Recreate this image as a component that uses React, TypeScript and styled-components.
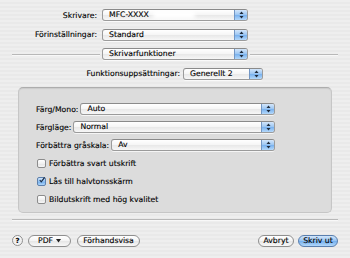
import React from 'react';
import styled, { createGlobalStyle } from 'styled-components';

const GlobalStyle = createGlobalStyle`
  html, body {
    margin: 0;
    padding: 0;
    background: #ececec;
  }
  body {
    font-family: "DejaVu Sans", "Liberation Sans", sans-serif;
    font-size: 7.7px;
    color: #000000;
    -webkit-text-stroke: 0.12px #000000;
  }
`;

const Window = styled.div`
  width: 350px;
  height: 258px;
  box-sizing: border-box;
  padding: 9px 12px 0;
  display: flex;
  flex-direction: column;
  background: repeating-linear-gradient(#eeeeee 0 2px, #e9e9e9 2px 4px);
  overflow: hidden;
`;

const TopSection = styled.div`
  display: flex;
  flex-direction: column;
  gap: 7.5px;
`;

const FormRow = styled.div<{ $labelWidth: number; $gap: number; $popWidth: number }>`
  display: grid;
  grid-template-columns: ${p => p.$labelWidth}px ${p => p.$popWidth}px;
  column-gap: ${p => p.$gap}px;
  align-items: center;
  height: 12px;
`;

const Label = styled.span`
  text-align: right;
  white-space: nowrap;
`;

const PopUpBox = styled.div<{ $flex?: boolean }>`
  position: relative;
  display: flex;
  align-items: center;
  height: 12px;
  box-sizing: border-box;
  border: 1px solid #9b9b9b;
  border-top-color: #8a8a8a;
  border-radius: 3px;
  background: linear-gradient(#ffffff, #f6f6f6 45%, #e9e9e9 55%, #f7f7f7);
  box-shadow: 0 1px 0 rgba(255, 255, 255, 0.7);
  overflow: hidden;
  ${p => (p.$flex ? 'flex: 1;' : '')}
`;

const PopUpValue = styled.span`
  flex: 1;
  padding-left: 6px;
  white-space: nowrap;
  line-height: 10px;
`;

const Redacted = styled.span`
  position: absolute;
  left: 50px;
  top: 1px;
  width: 42px;
  height: 8px;
  background: #ffffff;
  filter: blur(2px);
`;

const Stepper = styled.span`
  width: 12px;
  height: 100%;
  display: flex;
  align-items: center;
  justify-content: center;
  border-left: 1px solid #7296c4;
  background: linear-gradient(#d3e6fb, #9cc6f2 48%, #78b1ee 52%, #b4d8fa);
`;

const PopUp: React.FC<{ value: string; flex?: boolean; redacted?: boolean }> = ({ value, flex, redacted }) => (
  <PopUpBox $flex={flex}>
    <PopUpValue>{value}</PopUpValue>
    {redacted && <Redacted />}
    <Stepper>
      <svg width="5" height="8" viewBox="0 0 5 8">
        <path d="M2.5 0.5 L4.5 3 L0.5 3 Z" fill="#1e2a3a" />
        <path d="M0.5 5 L4.5 5 L2.5 7.5 Z" fill="#1e2a3a" />
      </svg>
    </Stepper>
  </PopUpBox>
);

const DividerRow = styled.div`
  display: grid;
  grid-template-columns: 88px 146px 88px;
  column-gap: 2px;
  align-items: center;
  height: 12px;
`;

const Rule = styled.div`
  height: 1px;
  background: #b8b8b8;
  box-shadow: 0 1px 0 #f8f8f8;
`;

const GroupBox = styled.div`
  margin: 7.5px 6px 0;
  height: 126px;
  box-sizing: border-box;
  padding: 15px 56px 0 17px;
  display: flex;
  flex-direction: column;
  gap: 6px;
  background: #dcdcdc;
  border: 1px solid #c6c6c6;
  border-top-color: #adadad;
  border-radius: 5px;
  box-shadow: inset 0 1px 1px rgba(0, 0, 0, 0.08);
`;

const GroupRow = styled.div`
  display: flex;
  align-items: center;
  gap: 2px;
  height: 12px;
`;

const CheckRow = styled.label`
  display: flex;
  align-items: center;
  gap: 3px;
  height: 12px;
  padding-left: 1px;
`;

const CheckBox = styled.span<{ $checked?: boolean }>`
  width: 9px;
  height: 9px;
  box-sizing: border-box;
  border: 1px solid #8c8c8c;
  border-radius: 2px;
  display: flex;
  align-items: center;
  justify-content: center;
  background: ${p =>
    p.$checked
      ? 'linear-gradient(#cfe4fb, #8fc0f1 50%, #6eabec 52%, #b0d6f9)'
      : 'linear-gradient(#ffffff, #f1f1f1 50%, #e4e4e4 52%, #f6f6f6)'};
  border-color: ${p => (p.$checked ? '#5d80ac' : '#8c8c8c')};
`;

const FooterRule = styled(Rule)`
  margin-top: 6px;
`;

const Footer = styled.div`
  display: flex;
  align-items: center;
  margin-top: 14.5px;
  height: 12px;
`;

const HelpButton = styled.span`
  width: 11px;
  height: 11px;
  box-sizing: border-box;
  border: 1px solid #8f8f8f;
  border-radius: 50%;
  display: flex;
  align-items: center;
  justify-content: center;
  font-weight: bold;
  font-size: 7px;
  background: linear-gradient(#ffffff, #ececec 55%, #f6f6f6);
  margin-right: 5px;
`;

const PushButton = styled.span<{ $default?: boolean; $width: number; $gapLeft?: number }>`
  width: ${p => p.$width}px;
  height: 12px;
  box-sizing: border-box;
  margin-left: ${p => p.$gapLeft ?? 0}px;
  display: flex;
  align-items: center;
  justify-content: center;
  gap: 3px;
  border: 1px solid ${p => (p.$default ? '#5a7fae' : '#8f8f8f')};
  border-radius: 6px;
  white-space: nowrap;
  background: ${p =>
    p.$default
      ? 'linear-gradient(#d2e6fb, #97c4f2 48%, #74afee 52%, #b2d8fb)'
      : 'linear-gradient(#ffffff, #f4f4f4 48%, #e6e6e6 52%, #f8f8f8)'};
`;

const Spacer = styled.div`
  flex: 1;
`;

export default function App() {
  return (
    <>
      <GlobalStyle />
      <Window>
        <TopSection>
          <FormRow $labelWidth={85} $gap={5} $popWidth={146}>
            <Label>Skrivare:</Label>
            <PopUp value="MFC-XXXX" redacted />
          </FormRow>
          <FormRow $labelWidth={85} $gap={5} $popWidth={146}>
            <Label>Förinställningar:</Label>
            <PopUp value="Standard" />
          </FormRow>
          <DividerRow>
            <Rule />
            <PopUp value="Skrivarfunktioner" />
            <Rule />
          </DividerRow>
          <FormRow $labelWidth={168} $gap={3} $popWidth={80}>
            <Label>Funktionsuppsättningar:</Label>
            <PopUp value="Generellt 2" />
          </FormRow>
        </TopSection>

        <GroupBox>
          <GroupRow>
            <Label>Färg/Mono:</Label>
            <PopUp value="Auto" flex />
          </GroupRow>
          <GroupRow>
            <Label>Färgläge:</Label>
            <PopUp value="Normal" flex />
          </GroupRow>
          <GroupRow>
            <Label>Förbättra gråskala:</Label>
            <PopUp value="Av" flex />
          </GroupRow>
          <CheckRow>
            <CheckBox />
            Förbättra svart utskrift
          </CheckRow>
          <CheckRow>
            <CheckBox $checked>
              <svg width="8" height="8" viewBox="0 0 8 8" style={{ marginTop: -2, marginLeft: 1 }}>
                <path d="M1 4 L3 6.5 L7.5 0.5" stroke="#1b2c44" strokeWidth="1.6" fill="none" />
              </svg>
            </CheckBox>
            Lås till halvtonsskärm
          </CheckRow>
          <CheckRow>
            <CheckBox />
            Bildutskrift med hög kvalitet
          </CheckRow>
        </GroupBox>

        <FooterRule />

        <Footer>
          <HelpButton>?</HelpButton>
          <PushButton $width={43}>
            PDF
            <svg width="5" height="4" viewBox="0 0 5 4">
              <path d="M0 0 L5 0 L2.5 3.5 Z" fill="#222" />
            </svg>
          </PushButton>
          <PushButton $width={63} $gapLeft={6}>Förhandsvisa</PushButton>
          <Spacer />
          <PushButton $width={36}>Avbryt</PushButton>
          <PushButton $width={40} $gapLeft={4} $default>Skriv ut</PushButton>
        </Footer>
      </Window>
    </>
  );
}
